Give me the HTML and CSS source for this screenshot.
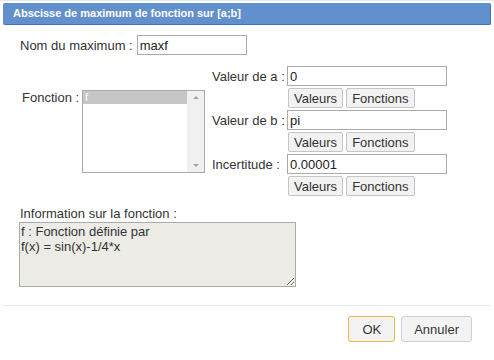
FILE: index.html
```html
<!DOCTYPE html>
<html lang="fr">
<head>
<title>Abscisse de maximum de fonction</title>
<meta charset="UTF-8">
<meta name="viewport" content="width=device-width, initial-scale=1.0">
<link rel="stylesheet" href="styles.css">
</head>
<body>

<div class="dialog">
  <div class="titlebar">Abscisse de maximum de fonction sur [a;b]</div>

  <div class="content">
    <div class="name-row">
      <label for="nom">Nom du maximum :</label>
      <input type="text" id="nom" class="field name-field" value="maxf">
    </div>

    <div class="main-row">
      <div class="func-col">
        <span class="func-label">Fonction :</span>
        <div class="listbox">
          <div class="list-items">
            <div class="list-item selected">f</div>
          </div>
          <div class="scrollbar">
            <span class="arrow up"></span>
            <span class="arrow down"></span>
          </div>
        </div>
      </div>

      <div class="params">
        <label for="va">Valeur de a :</label>
        <input type="text" id="va" class="field" value="0">
        <div class="btns">
          <button class="btn">Valeurs</button>
          <button class="btn">Fonctions</button>
        </div>

        <label for="vb">Valeur de b :</label>
        <input type="text" id="vb" class="field" value="pi">
        <div class="btns">
          <button class="btn">Valeurs</button>
          <button class="btn">Fonctions</button>
        </div>

        <label for="inc">Incertitude :</label>
        <input type="text" id="inc" class="field" value="0.00001">
        <div class="btns">
          <button class="btn">Valeurs</button>
          <button class="btn">Fonctions</button>
        </div>
      </div>
    </div>

    <div class="info">
      <div class="info-label">Information sur la fonction :</div>
      <textarea class="info-box" readonly>f : Fonction définie par
f(x) = sin(x)-1/4*x</textarea>
    </div>
  </div>

  <div class="footer">
    <button class="dlg-btn ok">OK</button>
    <button class="dlg-btn">Annuler</button>
  </div>
</div>

</body>
</html>
```

FILE: styles.css
```css
body {
  margin: 0;
  font-family: "Liberation Sans", Arial, sans-serif;
  font-size: 13px;
  color: #333;
  background: #fff;
}

.dialog {
  border-top: 1px solid #e6e6e6;
  padding: 2px 3px 0 3px;
}

.titlebar {
  height: 21px;
  line-height: 21px;
  background: #6190cc;
  border-bottom: 1px solid #3f72c2;
  border-right: 1px solid #3f72c2;
  border-radius: 2px;
  color: #fff;
  font-size: 11px;
  font-weight: bold;
  padding-left: 10px;
}

.content {
  padding: 0 0 0 16px;
}

.name-row {
  display: flex;
  align-items: center;
  margin-top: 10px;
}

.name-row label {
  margin-left: 1px;
  margin-right: 4px;
}

.field {
  box-sizing: border-box;
  height: 20px;
  border: 1px solid #aaa;
  padding: 0 2px;
  font-family: "Liberation Sans", Arial, sans-serif;
  font-size: 13px;
  color: #222;
  margin: 0;
}

.name-field {
  width: 110px;
}

.main-row {
  display: flex;
  align-items: center;
  margin-top: 11px;
}

.func-col {
  display: flex;
  align-items: flex-start;
}

.func-label {
  width: 60px;
  margin-left: 3px;
  white-space: nowrap;
}

.listbox {
  display: flex;
  width: 123px;
  height: 83px;
  box-sizing: border-box;
  border: 1px solid #aaa;
}

.list-items {
  flex: 1;
}

.list-item {
  height: 13px;
  line-height: 13px;
  font-size: 11px;
  padding-left: 2px;
  color: #fff;
}

.list-item.selected {
  background: #c6c6c6;
}

.scrollbar {
  width: 17px;
  background: #f0f0f0;
  display: flex;
  flex-direction: column;
  justify-content: space-between;
  align-items: center;
  padding: 5px 0 5px;
}

.arrow {
  width: 0;
  height: 0;
  border-left: 3px solid transparent;
  border-right: 3px solid transparent;
}

.arrow.up {
  border-bottom: 3px solid #a3a3a3;
}

.arrow.down {
  border-top: 3px solid #a3a3a3;
}

.params {
  display: grid;
  grid-template-columns: 73px 160px;
  column-gap: 2px;
  align-items: center;
  row-gap: 2px;
  margin-left: 7px;
}

.params label {
  white-space: nowrap;
}

.btns {
  grid-column: 2;
  display: flex;
  gap: 3px;
  padding-left: 1px;
}

.btn {
  height: 20px;
  box-sizing: border-box;
  padding: 0 5px;
  border: 1px solid #c5c5c5;
  border-radius: 2px;
  background: #f2f2f2;
  font-family: "Liberation Sans", Arial, sans-serif;
  font-size: 13px;
  color: #333;
  margin: 0;
}

.info {
  margin-top: 10px;
}

.info-label {
  margin-left: 1px;
  margin-bottom: 1px;
}

.info-box {
  display: block;
  box-sizing: border-box;
  width: 277px;
  height: 65px;
  margin: 0;
  border: 1px solid #aaa;
  background: #ecebe6;
  font-family: "Liberation Sans", Arial, sans-serif;
  font-size: 13px;
  line-height: 15px;
  color: #333;
  padding: 1px 1px;
  resize: both;
}

.footer {
  border-top: 1px solid #e8e8e8;
  margin-top: 18px;
  display: flex;
  justify-content: flex-end;
  gap: 6px;
  padding: 10px 19px 0 0;
}

.dlg-btn {
  height: 26px;
  box-sizing: border-box;
  padding: 0 12px;
  border: 1px solid #d0d0d0;
  border-radius: 3px;
  background: #f3f3f3;
  font-family: "Liberation Sans", Arial, sans-serif;
  font-size: 13px;
  color: #333;
}

.dlg-btn.ok {
  border-color: #e8b84a;
  padding: 0 13px;
}
```
